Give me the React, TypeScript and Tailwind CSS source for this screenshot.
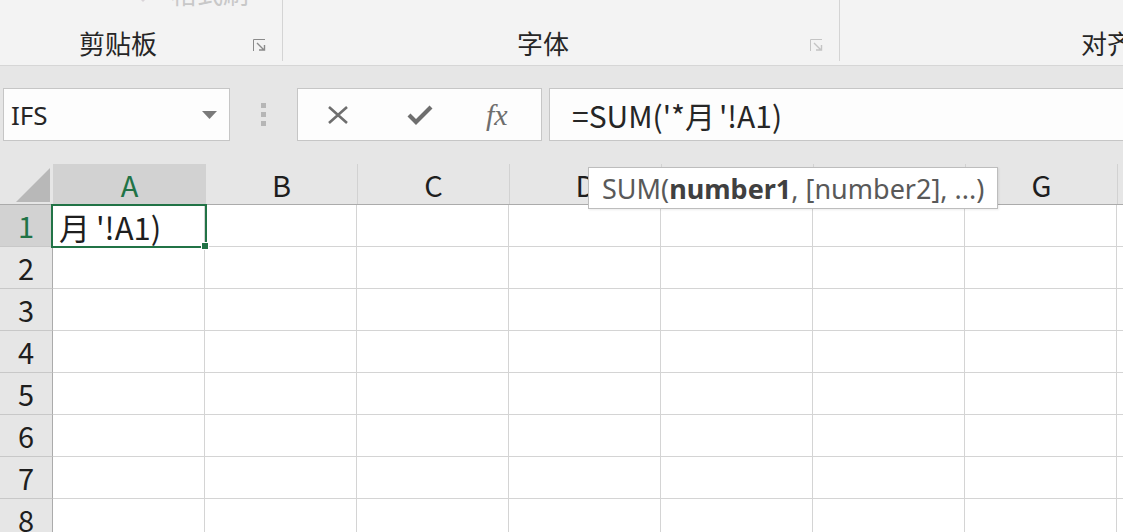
import React from 'react';

// Excel-like sheet: ribbon tail, formula bar and a grid with a SUM tooltip

const cols = ['A', 'B', 'C', 'D', 'E', 'F', 'G'];
const rows = [1, 2, 3, 4, 5, 6, 7, 8];

const ui = "font-['Noto_Sans','Noto_Sans_CJK_SC',sans-serif]";
const sheet = "font-['Noto_Sans_CJK_SC','Noto_Sans',sans-serif]";

function Launcher({ light }: { light?: boolean }) {
  const c = light ? '#c4c4c4' : '#8a8a8a';
  return (
    <svg width="14" height="13" viewBox="0 0 14 13" className="mb-[9px]">
      <path d="M0.5 12 V0.5 H12" fill="none" stroke={c} strokeWidth="1" />
      <path d="M4 4 L11 11 M6 11 H11.5 V6" fill="none" stroke={c} strokeWidth="1.4" />
    </svg>
  );
}

function Ribbon() {
  return (
    <div className={`h-[66px] shrink-0 bg-[#f3f3f3] border-b border-[#d6d6d6] flex overflow-hidden ${ui} text-[#262626]`}>
      <div className="w-[283px] shrink-0 h-[61px] border-r border-[#d4d4d4] flex flex-col">
        <div className="-mt-[20px] h-[28px] flex items-center pl-[135px] gap-[20px] text-[#c8c8c8] text-[26px] leading-[28px]">
          <svg width="16" height="16" viewBox="0 0 16 16">
            <path d="M8 16 L0 8 L8 0 L16 8 Z" fill="#d9d4d8" />
          </svg>
          <span>格式刷</span>
        </div>
        <div className="mt-auto flex items-end">
          <span className="ml-[79px] text-[26px] leading-[32px] pb-[1px]">剪贴板</span>
          <span className="ml-auto mr-[15px]">
            <Launcher />
          </span>
        </div>
      </div>
      <div className="w-[557px] shrink-0 h-[61px] border-r border-[#d4d4d4] flex items-end">
        <span className="ml-[234px] text-[26px] leading-[32px] pb-[1px]">字体</span>
        <span className="ml-auto mr-[15px]">
          <Launcher light />
        </span>
      </div>
      <div className="w-[400px] shrink-0 h-[61px] flex items-end">
        <span className="ml-[241px] text-[26px] leading-[32px] pb-[1px] whitespace-nowrap">对齐方式</span>
      </div>
    </div>
  );
}

function FormulaBar() {
  return (
    <div className={`h-[98px] shrink-0 flex items-start pt-[22px] ${ui}`}>
      <div className="ml-[3px] w-[227px] shrink-0 h-[53px] bg-[#fdfdfd] border border-[#c6c6c6] flex items-center pl-[7px] pr-[12px]">
        <span className="text-[26px] text-[#262626] leading-none">IFS</span>
        <svg width="15" height="8" viewBox="0 0 15 8" className="ml-auto">
          <path d="M0 0 H15 L7.5 8 Z" fill="#7a7a7a" />
        </svg>
      </div>
      <div className="w-[67px] shrink-0 h-[53px] flex flex-col items-center justify-center gap-[4px]">
        <span className="w-[5px] h-[5px] bg-[#b6b6b6]" />
        <span className="w-[5px] h-[5px] bg-[#b6b6b6]" />
        <span className="w-[5px] h-[5px] bg-[#b6b6b6]" />
      </div>
      <div className="w-[245px] shrink-0 h-[53px] bg-[#fdfdfd] border border-[#c6c6c6] flex items-center">
        <svg width="22" height="22" viewBox="0 0 22 22" className="ml-[29px]">
          <path d="M2 3 L20 19 M20 3 L2 19" stroke="#6e6e6e" strokeWidth="2.6" fill="none" />
        </svg>
        <svg width="26" height="22" viewBox="0 0 26 22" className="ml-[58px]">
          <path d="M2 11 L9 18 L24 3" stroke="#6e6e6e" strokeWidth="4.2" fill="none" />
        </svg>
        <span className="ml-[53px] font-['Liberation_Serif',serif] italic text-[30px] text-[#6e6e6e] leading-none">fx</span>
      </div>
      <div className="ml-[7px] flex-1 h-[53px] bg-[#fdfdfd] border border-[#c6c6c6] border-r-0 flex items-center pl-[22px]">
        <span className={`${sheet} text-[30px] text-[#262626] leading-none`}>
          =SUM(&#39;*<span className="mr-[4px]">月</span>&#39;!A1)
        </span>
      </div>
    </div>
  );
}

function Grid() {
  return (
    <div className={`relative shrink-0 flex flex-col ${sheet} text-[29px] text-[#1e1e1e]`}>
      <div className="flex h-[41px] border-b border-[#ababab]">
        <div className="w-[53px] shrink-0 flex items-end justify-end pr-[3px] pb-[2px]">
          <svg width="34" height="34" viewBox="0 0 34 34">
            <path d="M34 0 V34 H0 Z" fill="#b8b8b8" />
          </svg>
        </div>
        {cols.map((c) => (
          <div
            key={c}
            className={`w-[152px] shrink-0 border-l border-[#d2d2d2] flex items-center justify-center leading-none ${
              c === 'A' ? 'bg-[#d2d2d2] text-[#217346]' : 'text-[#1e1e1e]'
            }`}
          >
            {c}
          </div>
        ))}
        <div className="flex-1 border-l border-[#d2d2d2]" />
      </div>
      {rows.map((r) => (
        <div key={r} className="flex h-[42px]">
          <div
            className={`w-[53px] shrink-0 border-r border-b border-r-[#ababab] border-b-[#c8c8c8] flex items-center justify-center leading-none ${
              r === 1 ? 'bg-[#d2d2d2] text-[#217346]' : 'bg-[#e6e6e6]'
            }`}
          >
            {r}
          </div>
          {cols.map((c) => (
            <div
              key={c}
              className={`relative w-[152px] shrink-0 bg-white border-r border-b border-[#d4d4d4] ${
                r === 1 && c === 'A' ? 'z-10' : ''
              }`}
            >
              {r === 1 && c === 'A' && (
                <div className="absolute -left-[2px] -top-[1px] -right-[3px] -bottom-[2px] border-2 border-[#217346] flex items-center pl-[6px]">
                  <span className="leading-none text-[31px]">
                    <span className="mr-[6px]">月</span>&#39;!A1)
                  </span>
                  <span className="absolute -right-[4px] -bottom-[4px] w-[8px] h-[8px] bg-[#217346] border border-white" />
                </div>
              )}
            </div>
          ))}
          <div className="flex-1 bg-white border-b border-[#d4d4d4]" />
        </div>
      ))}
      <div
        className={`absolute z-20 left-[588px] top-[3px] h-[42px] px-[13px] bg-white border border-[#bdbdbd] shadow-[1px_1px_2px_rgba(0,0,0,0.08)] flex items-center ${ui} text-[27px] text-[#595959] whitespace-nowrap leading-none`}
      >
        SUM(<b className="font-bold text-[#404040]">number1</b>, [number2], ...)
      </div>
    </div>
  );
}

export default function App() {
  return (
    <div className="w-[1123px] h-[532px] overflow-hidden bg-[#e6e6e6] flex flex-col">
      <Ribbon />
      <FormulaBar />
      <Grid />
    </div>
  );
}
